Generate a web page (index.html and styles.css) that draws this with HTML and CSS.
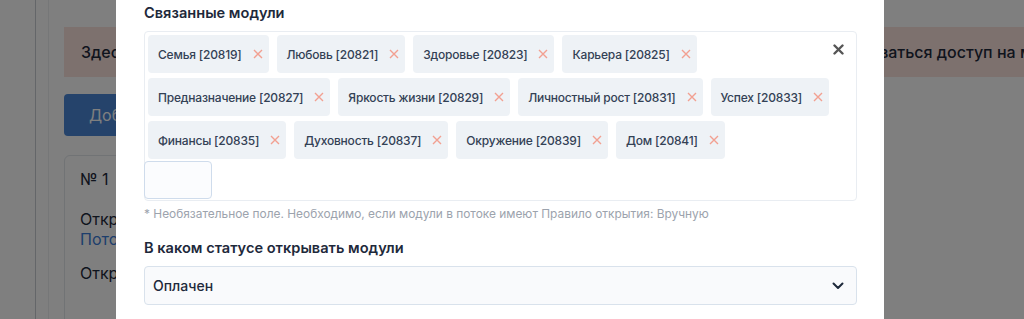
FILE: index.html
```html
<!DOCTYPE html>
<html lang="ru">

<head>
    <meta charset="UTF-8">
    <title>Правила открытия модулей</title>
    <link rel="stylesheet" href="styles.css">
</head>

<body>
    <div class="page">
        <div class="rail"></div>
        <div class="content">
            <div class="alert">Здесь можно задать все правила, по которым всем участникам потока будет автоматически открываться доступ на модули курса</div>

            <button class="btn-primary">Добавить правило</button>

            <div class="card">
                <div class="card-num">№ 1</div>
                <div class="card-row">
                    Открывать модули по правилу<br>
                    <a href="#" class="link">Поток: Основной поток</a>
                </div>
                <div class="card-row">Открывать в статусе: Оплачен</div>
            </div>
        </div>
    </div>

    <div class="overlay"></div>

    <div class="modal">
        <div class="field-label">Связанные модули</div>
        <div class="choices">
            <div class="tags">
                <span class="tag">Семья [20819]<svg class="tag-x" width="10" height="10" viewBox="0 0 10 10"><path d="M1 1 L9 9 M9 1 L1 9"/></svg></span>
                <span class="tag">Любовь [20821]<svg class="tag-x" width="10" height="10" viewBox="0 0 10 10"><path d="M1 1 L9 9 M9 1 L1 9"/></svg></span>
                <span class="tag">Здоровье [20823]<svg class="tag-x" width="10" height="10" viewBox="0 0 10 10"><path d="M1 1 L9 9 M9 1 L1 9"/></svg></span>
                <span class="tag">Карьера [20825]<svg class="tag-x" width="10" height="10" viewBox="0 0 10 10"><path d="M1 1 L9 9 M9 1 L1 9"/></svg></span>
                <span class="tag">Предназначение [20827]<svg class="tag-x" width="10" height="10" viewBox="0 0 10 10"><path d="M1 1 L9 9 M9 1 L1 9"/></svg></span>
                <span class="tag">Яркость жизни [20829]<svg class="tag-x" width="10" height="10" viewBox="0 0 10 10"><path d="M1 1 L9 9 M9 1 L1 9"/></svg></span>
                <span class="tag">Личностный рост [20831]<svg class="tag-x" width="10" height="10" viewBox="0 0 10 10"><path d="M1 1 L9 9 M9 1 L1 9"/></svg></span>
                <span class="tag">Успех [20833]<svg class="tag-x" width="10" height="10" viewBox="0 0 10 10"><path d="M1 1 L9 9 M9 1 L1 9"/></svg></span>
                <span class="tag">Финансы [20835]<svg class="tag-x" width="10" height="10" viewBox="0 0 10 10"><path d="M1 1 L9 9 M9 1 L1 9"/></svg></span>
                <span class="tag">Духовность [20837]<svg class="tag-x" width="10" height="10" viewBox="0 0 10 10"><path d="M1 1 L9 9 M9 1 L1 9"/></svg></span>
                <span class="tag">Окружение [20839]<svg class="tag-x" width="10" height="10" viewBox="0 0 10 10"><path d="M1 1 L9 9 M9 1 L1 9"/></svg></span>
                <span class="tag">Дом [20841]<svg class="tag-x" width="10" height="10" viewBox="0 0 10 10"><path d="M1 1 L9 9 M9 1 L1 9"/></svg></span>
            </div>
            <input type="text" class="choices-input">
            <span class="clear-all">
                <svg width="11" height="11" viewBox="0 0 11 11">
                    <path d="M1.5 1.5 L9.5 9.5 M9.5 1.5 L1.5 9.5" stroke="#555" stroke-width="2.4" stroke-linecap="round"/>
                </svg>
            </span>
        </div>
        <div class="hint">* Необязательное поле. Необходимо, если модули в потоке имеют Правило открытия: Вручную</div>

        <div class="field-label label-gap">В каком статусе открывать модули</div>
        <div class="select">
            <span>Оплачен</span>
            <svg width="12" height="8" viewBox="0 0 12 8">
                <path d="M1.5 1.5 L6 6 L10.5 1.5" fill="none" stroke="#1e293b" stroke-width="2" stroke-linecap="round" stroke-linejoin="round"/>
            </svg>
        </div>
    </div>
</body>

</html>
```

FILE: styles.css
```css
body {
    margin: 0;
    height: 319px;
    overflow: hidden;
    background-color: #fff;
    font-family: Inter, "Noto Sans", sans-serif;
    color: #1e293b;
}

/* background page */

.page {
    display: flex;
    height: 319px;
    overflow: hidden;
}

.rail {
    width: 35px;
    flex-shrink: 0;
    border-right: 1px solid #c8ccd2;
}

.content {
    flex: 1;
    padding: 27px 0 0 28px;
    min-width: 0;
    background: linear-gradient(to right, transparent 12px, #eceef1 12px, #eceef1 13px, transparent 13px);
}

.alert {
    height: 50px;
    line-height: 50px;
    padding-left: 17px;
    background-color: #fbe2dc;
    font-size: 16px;
    font-weight: 500;
    white-space: nowrap;
    overflow: hidden;
}

.btn-primary {
    display: block;
    margin-top: 17px;
    height: 42px;
    width: 220px;
    padding: 0 25px;
    border: none;
    border-radius: 4px;
    background-color: #4a86d6;
    color: #fff;
    font-family: inherit;
    font-size: 16px;
    text-align: left;
}

.card {
    margin-top: 19px;
    width: 600px;
    height: 200px;
    padding: 13px 15px;
    border: 1px solid #e2e6eb;
    border-radius: 6px;
    font-size: 16px;
    line-height: 20px;
}

.card-row {
    margin-top: 20px;
}

.card-row + .card-row {
    margin-top: 14px;
}

.link {
    color: #3b7dd8;
    text-decoration: none;
}

.overlay {
    position: fixed;
    inset: 0;
    background-color: rgba(0, 0, 0, 0.5);
}

/* modal */

.modal {
    position: fixed;
    top: 0;
    left: 116px;
    width: 768px;
    height: 319px;
    box-sizing: border-box;
    padding: 3px 27px 0 28px;
    background-color: #fff;
}

.field-label {
    font-size: 14.6px;
    line-height: 20px;
    font-weight: 600;
    color: #1e293b;
}

.label-gap {
    margin-top: 16px;
}

.choices {
    position: relative;
    margin-top: 8px;
    padding: 3px;
    border: 1px solid #e9edf2;
    border-radius: 4px;
}

.tags {
    display: flex;
    flex-wrap: wrap;
    gap: 5px 8px;
    padding-right: 20px;
}

.tag {
    display: flex;
    align-items: center;
    height: 38px;
    padding: 0 6px 0 10px;
    background-color: #eef2f6;
    border-radius: 4px;
    font-size: 12px;
    font-weight: 500;
    letter-spacing: -0.2px;
    color: #334155;
    white-space: nowrap;
}

.tag-x {
    margin-left: 11px;
    stroke: #f2a091;
    stroke-width: 1.4;
}

.choices-input {
    display: block;
    box-sizing: border-box;
    width: 68px;
    height: 38px;
    margin: 2px 0 -2px -4px;
    border: 1px solid #cfdcec;
    border-radius: 4px;
    background-color: #fbfcfe;
}

.clear-all {
    position: absolute;
    top: 7px;
    right: 12px;
}

.hint {
    margin-top: 5px;
    font-size: 11.9px;
    line-height: 16px;
    color: #9ca3ad;
}

.select {
    display: flex;
    align-items: center;
    justify-content: space-between;
    margin-top: 8px;
    height: 39px;
    box-sizing: border-box;
    padding: 0 12px 0 8px;
    border: 1px solid #d9e2ec;
    border-radius: 4px;
    background-color: #f9fafc;
    font-size: 14px;
    font-weight: 500;
    color: #1e293b;
}
```
